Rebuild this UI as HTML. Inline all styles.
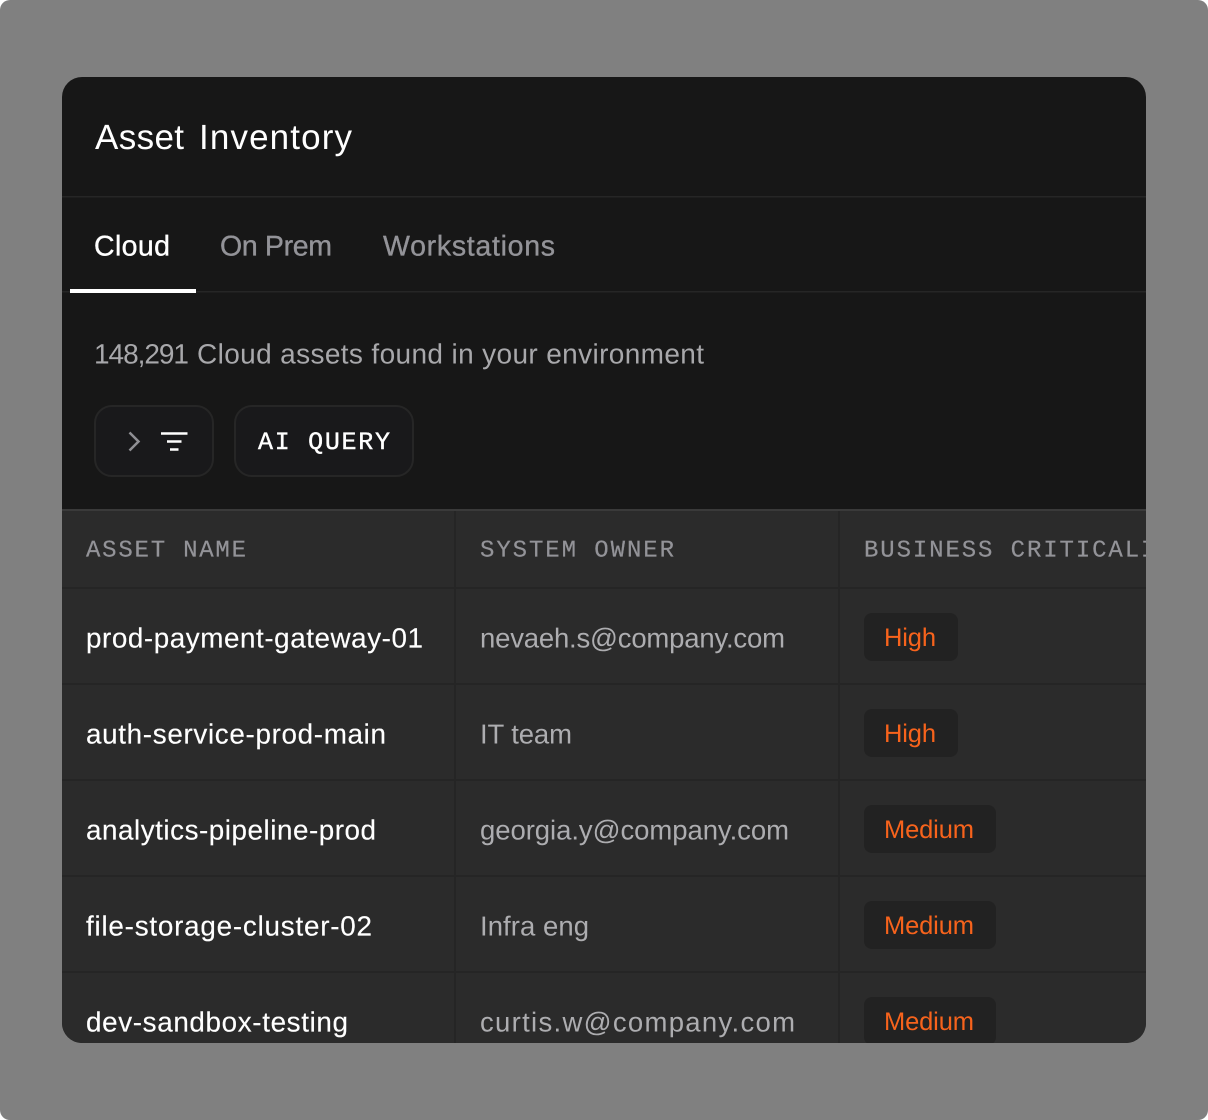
<!DOCTYPE html>
<html lang="en">
<head>
<meta charset="utf-8">
<title>Asset Inventory</title>
<style>
html,body{margin:0;padding:0;width:1208px;height:1120px;overflow:hidden;background:#fff}
svg{display:block}
text{font-family:"Liberation Sans",sans-serif;text-rendering:geometricPrecision}
.m{font-family:"Liberation Mono",monospace}
.tab{font-size:28.500px;fill:#939398;stroke:#939398;stroke-width:.35px}
.hd{font-size:24px;fill:#939398;font-family:"Liberation Mono",monospace;stroke:#939398;stroke-width:.2px}
.n{font-size:27.800px;fill:#fff;stroke:#fff;stroke-width:.15px}
.o{font-size:27.500px;fill:#adadb0}
.b{font-size:25.500px;fill:#f7631c}
</style>
</head>
<body>
<svg width="1208" height="1120" viewBox="0 0 1208 1120" xmlns="http://www.w3.org/2000/svg">
<defs><clipPath id="c"><rect x="62" y="77" width="1084" height="966" rx="20"/></clipPath></defs>
<rect width="1208" height="1120" rx="10" fill="#808080"/>
<g clip-path="url(#c)">
<rect x="62" y="77" width="1084" height="966" fill="#171717"/>
<rect x="62" y="196" width="1084" height="1.5" fill="#262626"/>
<rect x="62" y="291" width="1084" height="1.5" fill="#262626"/>
<rect x="70" y="289" width="126" height="4" fill="#fff"/>
<text x="95" y="149" font-size="35" fill="#fff" textLength="89" lengthAdjust="spacing">Asset</text>
<text x="199" y="149" font-size="35" fill="#fff" textLength="153" lengthAdjust="spacing">Inventory</text>
<text x="94" y="255.500" class="tab" style="fill:#fff;stroke:#fff" textLength="76" lengthAdjust="spacing">Cloud</text>
<text x="220" y="255.500" class="tab" textLength="112" lengthAdjust="spacing">On Prem</text>
<text x="383" y="255.500" class="tab" textLength="172" lengthAdjust="spacing">Workstations</text>
<text x="94" y="363.500" font-size="28" fill="#a8a8ab" textLength="95" lengthAdjust="spacing">148,291</text>
<text x="197" y="363.500" font-size="28" fill="#a8a8ab" textLength="507" lengthAdjust="spacing">Cloud assets found in your environment</text>
<rect x="95" y="406" width="118" height="70" rx="17" fill="#19191b" stroke="#262626" stroke-width="2"/>
<path d="M129.500 432.500L138.500 441.500L129.500 450.500" fill="none" stroke="#8f8f94" stroke-width="2.500"/>
<path d="M161 433.500H187.500M167 441.500H181.500M170 449.500H178.500" fill="none" stroke="#fff" stroke-width="2.500"/>
<rect x="235" y="406" width="178" height="70" rx="17" fill="#19191b" stroke="#262626" stroke-width="2"/>
<text x="258" y="449" class="m" font-size="25" fill="#fff" stroke="#fff" stroke-width=".4" textLength="132" lengthAdjust="spacing">AI QUERY</text>

<rect x="62" y="510" width="1084" height="533" fill="#2b2b2b"/>
<rect x="62" y="509" width="1084" height="2" fill="#3a3a3a"/>
<g fill="#252525">
<rect x="62" y="587" width="1084" height="2"/>
<rect x="62" y="683" width="1084" height="2"/>
<rect x="62" y="779" width="1084" height="2"/>
<rect x="62" y="875" width="1084" height="2"/>
<rect x="62" y="971" width="1084" height="2"/>
<rect x="454" y="511" width="2" height="532"/>
<rect x="838" y="511" width="2" height="532"/>
</g>
<text x="86" y="556.500" class="hd" textLength="160" lengthAdjust="spacing">ASSET NAME</text>
<text x="480" y="556.500" class="hd" textLength="194" lengthAdjust="spacing">SYSTEM OWNER</text>
<text x="864" y="556.500" class="hd" textLength="324" lengthAdjust="spacing">BUSINESS CRITICALITY</text>

<text x="86" y="647.500" class="n" textLength="337" lengthAdjust="spacing">prod-payment-gateway-01</text>
<text x="480" y="647.500" class="o" textLength="305" lengthAdjust="spacing">nevaeh.s@company.com</text>
<rect x="864" y="613" width="94" height="48" rx="8" fill="#222"/>
<text x="884" y="646" class="b" textLength="52" lengthAdjust="spacing">High</text>

<text x="86" y="743.500" class="n" textLength="300" lengthAdjust="spacing">auth-service-prod-main</text>
<text x="480" y="743.500" class="o" textLength="92" lengthAdjust="spacing">IT team</text>
<rect x="864" y="709" width="94" height="48" rx="8" fill="#222"/>
<text x="884" y="742" class="b" textLength="52" lengthAdjust="spacing">High</text>

<text x="86" y="839.500" class="n" textLength="290" lengthAdjust="spacing">analytics-pipeline-prod</text>
<text x="480" y="839.500" class="o" textLength="309" lengthAdjust="spacing">georgia.y@company.com</text>
<rect x="864" y="805" width="132" height="48" rx="8" fill="#222"/>
<text x="884" y="838" class="b" textLength="90" lengthAdjust="spacing">Medium</text>

<text x="86" y="935.500" class="n" textLength="286" lengthAdjust="spacing">file-storage-cluster-02</text>
<text x="480" y="935.500" class="o" textLength="109" lengthAdjust="spacing">Infra eng</text>
<rect x="864" y="901" width="132" height="48" rx="8" fill="#222"/>
<text x="884" y="934" class="b" textLength="90" lengthAdjust="spacing">Medium</text>

<text x="86" y="1031.500" class="n" textLength="262" lengthAdjust="spacing">dev-sandbox-testing</text>
<text x="480" y="1031.500" class="o" textLength="315" lengthAdjust="spacing">curtis.w@company.com</text>
<rect x="864" y="997" width="132" height="48" rx="8" fill="#222"/>
<text x="884" y="1030" class="b" textLength="90" lengthAdjust="spacing">Medium</text>
</g>
</svg>
</body>
</html>
